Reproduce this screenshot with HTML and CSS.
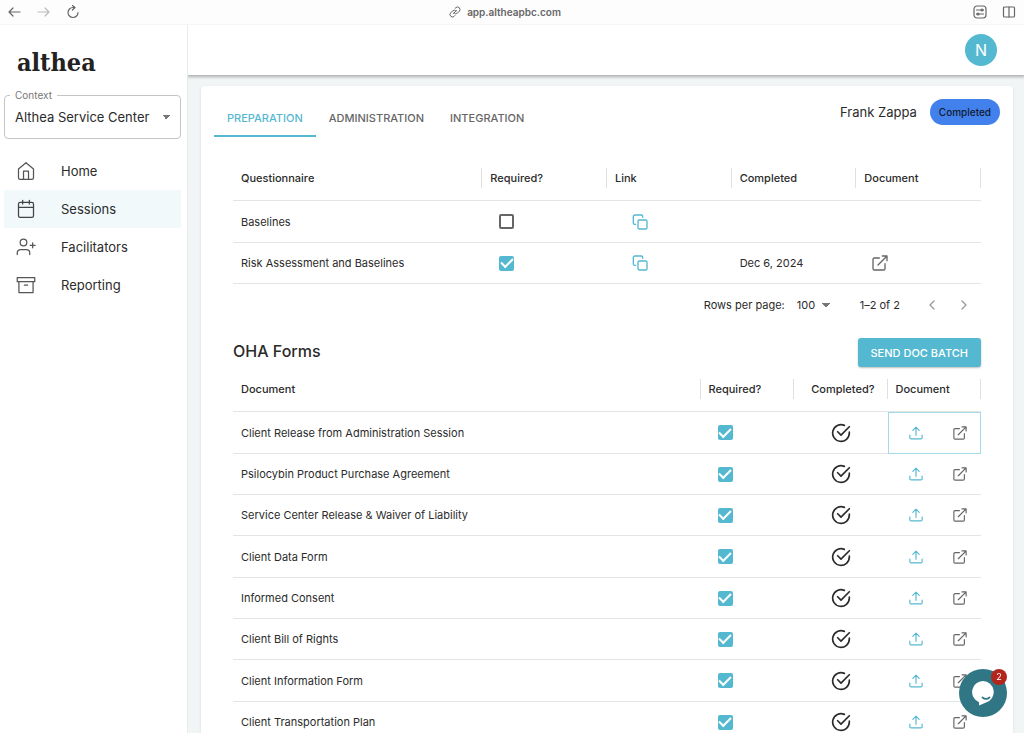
FILE: index.html
```html
<!DOCTYPE html>
<html lang="en">
<head>
<meta charset="utf-8">
<meta name="viewport" content="width=device-width, initial-scale=1">
<title>Althea</title>
<link rel="stylesheet" href="styles.css">
</head>
<body>
<svg class="sprite" aria-hidden="true">
  <symbol id="copy" viewBox="0 0 24 24"><rect x="9" y="9" width="13.500" height="13.500" rx="2"/><path d="M5.500 15.500H4a2 2 0 0 1-2-2V3.500a2 2 0 0 1 2-2h10a2 2 0 0 1 2 2V5"/></symbol>
  <symbol id="external" viewBox="0 0 24 24"><path d="M19.500 13v7.500a2 2 0 0 1-2 2h-14a2 2 0 0 1-2-2v-14a2 2 0 0 1 2-2H11M15.500 1.500h7v7M9 15 22.500 1.500"/></symbol>
  <symbol id="upload" viewBox="0 0 24 24"><path d="M1.500 15.500v4.500a2 2 0 0 0 2 2h17a2 2 0 0 0 2-2v-4.500M12 16V2M6.500 7.500 12 2l5.500 5.500"/></symbol>
  <symbol id="done" viewBox="0 0 24 24"><path d="M22 11v1a10 10 0 1 1-6-9.150M8 10.500l4 4L22 4.500"/></symbol>
</svg>

<header class="browser">
  <div class="browser-side">
    <button class="tool" aria-label="Back"><svg class="i14" viewBox="0 0 14 14"><path d="M1 7h11M5 3 1 7l4 4"/></svg></button>
    <button class="tool faded" aria-label="Forward"><svg class="i14" viewBox="0 0 14 14"><path d="M1 7h11M8 3l4 4-4 4"/></svg></button>
    <button class="tool" aria-label="Reload"><svg class="i14" viewBox="0 0 14 14"><path d="M12 7.500A5 5 0 1 1 7 2.500h2M6.500.5l2.500 2-2.500 2.500"/></svg></button>
  </div>
  <div class="address"><svg class="i12" viewBox="0 0 24 24"><path d="M10 14a5 5 0 0 0 7 0l4-4a5 5 0 0 0-7-7l-2 2M14 10a5 5 0 0 0-7 0l-4 4a5 5 0 0 0 7 7l2-2M9 15l6-6"/></svg><span>app.altheapbc.com</span></div>
  <div class="browser-side end">
    <button class="tool" aria-label="Page settings"><svg class="i14" viewBox="0 0 14 14"><rect x="1" y="1" width="12" height="12" rx="3"/><path d="M3.500 5H8M10 5h.5M3.500 9H4M6 9h4.500"/><circle cx="9" cy="5" r="1"/><circle cx="5" cy="9" r="1"/></svg></button>
    <button class="tool" aria-label="Split view"><svg class="i14" viewBox="0 0 14 14"><rect x="1.500" y="2" width="11" height="10" rx="1"/><path d="M7 2v10"/></svg></button>
  </div>
</header>

<div class="app">
  <aside class="sidebar">
    <div class="logo">althea</div>
    <fieldset class="context">
      <legend><label for="context">Context</label></legend>
      <select id="context"><option>Althea Service Center</option></select>
    </fieldset>
    <nav class="nav">
      <a href="#"><svg class="i20" viewBox="0 0 24 24"><path d="M3 9.500 12 2l9 7.500V20a2 2 0 0 1-2 2H5a2 2 0 0 1-2-2zM9 22V12h6v10"/></svg>Home</a>
      <a href="#" class="current" aria-current="page"><svg class="i20" viewBox="0 0 24 24"><rect x="3" y="4" width="18" height="18" rx="2"/><path d="M3 10h18M8 1.500V6M16 1.500V6"/></svg>Sessions</a>
      <a href="#"><svg class="i20" viewBox="0 0 24 24"><circle cx="9" cy="6.500" r="4"/><path d="M1.500 21v-2a4 4 0 0 1 4-4h7a4 4 0 0 1 4 4v2M20 7v6M17 10h6"/></svg>Facilitators</a>
      <a href="#"><svg class="i20" viewBox="0 0 24 24"><path d="M1.500 3h21v5h-21zM3.500 8v13h17V8M10 12h4"/></svg>Reporting</a>
    </nav>
  </aside>

  <div class="page">
    <header class="appbar"><button class="avatar" aria-label="Account">N</button></header>
    <main class="card">
      <div class="card-top">
        <div class="tabs" role="tablist">
          <button class="tab active" role="tab" aria-selected="true">PREPARATION</button>
          <button class="tab" role="tab" aria-selected="false">ADMINISTRATION</button>
          <button class="tab" role="tab" aria-selected="false">INTEGRATION</button>
        </div>
        <div class="client"><span class="client-name">Frank Zappa</span><span class="chip">Completed</span></div>
      </div>

      <div class="sheet">
        <table class="grid questionnaires">
          <thead><tr><th class="wide"><span>Questionnaire</span></th><th><span>Required?</span></th><th><span>Link</span></th><th><span>Completed</span></th><th><span>Document</span></th></tr></thead>
          <tbody>
            <tr><td>Baselines</td><td class="tick"><input type="checkbox" aria-label="Baselines required"></td><td class="link"><button class="icon teal" aria-label="Copy link"><svg class="i16"><use href="#copy"/></svg></button></td><td></td><td></td></tr>
            <tr><td>Risk Assessment and Baselines</td><td class="tick"><input type="checkbox" checked aria-label="Risk Assessment and Baselines required"></td><td class="link"><button class="icon teal" aria-label="Copy link"><svg class="i16"><use href="#copy"/></svg></button></td><td>Dec 6, 2024</td><td class="open"><button class="icon" aria-label="Open document"><svg class="i16"><use href="#external"/></svg></button></td></tr>
          </tbody>
        </table>
        <div class="pager">
          <label for="rows">Rows per page:</label>
          <select id="rows"><option>100</option></select>
          <span class="range">1–2 of 2</span>
          <button class="icon" disabled aria-label="Previous page"><svg class="i12" viewBox="0 0 12 12"><path d="M8 2 4 6l4 4"/></svg></button>
          <button class="icon" disabled aria-label="Next page"><svg class="i12" viewBox="0 0 12 12"><path d="m4 2 4 4-4 4"/></svg></button>
        </div>

        <div class="forms-top"><h2>OHA Forms</h2><button class="send">SEND DOC BATCH</button></div>
        <table class="grid forms">
          <thead><tr><th class="wide"><span>Document</span></th><th><span>Required?</span></th><th class="completed"><span>Completed?</span></th><th><span>Document</span></th></tr></thead>
          <tbody>
            <tr><td>Client Release from Administration Session</td><td class="tick"><input type="checkbox" checked aria-label="Required"></td><td class="mid"><svg class="i20"><use href="#done"/></svg></td><td class="focused"><div class="actions"><button class="icon teal" aria-label="Upload"><svg class="i14"><use href="#upload"/></svg></button><button class="icon" aria-label="Open"><svg class="i14"><use href="#external"/></svg></button></div></td></tr>
            <tr><td>Psilocybin Product Purchase Agreement</td><td class="tick"><input type="checkbox" checked aria-label="Required"></td><td class="mid"><svg class="i20"><use href="#done"/></svg></td><td><div class="actions"><button class="icon teal" aria-label="Upload"><svg class="i14"><use href="#upload"/></svg></button><button class="icon" aria-label="Open"><svg class="i14"><use href="#external"/></svg></button></div></td></tr>
            <tr><td>Service Center Release &amp; Waiver of Liability</td><td class="tick"><input type="checkbox" checked aria-label="Required"></td><td class="mid"><svg class="i20"><use href="#done"/></svg></td><td><div class="actions"><button class="icon teal" aria-label="Upload"><svg class="i14"><use href="#upload"/></svg></button><button class="icon" aria-label="Open"><svg class="i14"><use href="#external"/></svg></button></div></td></tr>
            <tr><td>Client Data Form</td><td class="tick"><input type="checkbox" checked aria-label="Required"></td><td class="mid"><svg class="i20"><use href="#done"/></svg></td><td><div class="actions"><button class="icon teal" aria-label="Upload"><svg class="i14"><use href="#upload"/></svg></button><button class="icon" aria-label="Open"><svg class="i14"><use href="#external"/></svg></button></div></td></tr>
            <tr><td>Informed Consent</td><td class="tick"><input type="checkbox" checked aria-label="Required"></td><td class="mid"><svg class="i20"><use href="#done"/></svg></td><td><div class="actions"><button class="icon teal" aria-label="Upload"><svg class="i14"><use href="#upload"/></svg></button><button class="icon" aria-label="Open"><svg class="i14"><use href="#external"/></svg></button></div></td></tr>
            <tr><td>Client Bill of Rights</td><td class="tick"><input type="checkbox" checked aria-label="Required"></td><td class="mid"><svg class="i20"><use href="#done"/></svg></td><td><div class="actions"><button class="icon teal" aria-label="Upload"><svg class="i14"><use href="#upload"/></svg></button><button class="icon" aria-label="Open"><svg class="i14"><use href="#external"/></svg></button></div></td></tr>
            <tr><td>Client Information Form</td><td class="tick"><input type="checkbox" checked aria-label="Required"></td><td class="mid"><svg class="i20"><use href="#done"/></svg></td><td><div class="actions"><button class="icon teal" aria-label="Upload"><svg class="i14"><use href="#upload"/></svg></button><button class="icon" aria-label="Open"><svg class="i14"><use href="#external"/></svg></button></div></td></tr>
            <tr><td>Client Transportation Plan</td><td class="tick"><input type="checkbox" checked aria-label="Required"></td><td class="mid"><svg class="i20"><use href="#done"/></svg></td><td><div class="actions"><button class="icon teal" aria-label="Upload"><svg class="i14"><use href="#upload"/></svg></button><button class="icon" aria-label="Open"><svg class="i14"><use href="#external"/></svg></button></div></td></tr>
          </tbody>
        </table>
      </div>
    </main>
  </div>
</div>

<button class="chat" aria-label="Open chat, 2 unread">
  <svg class="bubble" viewBox="0 0 24 26"><path fill="#fff" d="M12 1a11 11 0 0 1 3 21.500L8 25.500v-3.300A11 11 0 0 1 12 1z"/><path d="M11.500 17.500c2 1.600 5 1.600 7 0" fill="none" stroke="#307684" stroke-width="1.800" stroke-linecap="round"/></svg>
  <span class="unread">2</span>
</button>
</body>
</html>
```
FILE: styles.css
```css
* { box-sizing: border-box; }
html { scrollbar-width: none; }
body {
  margin: 0;
  min-height: 100vh;
  display: flex;
  flex-direction: column;
  font: 11px/16px Inter, "Liberation Sans", sans-serif;
  color: #2b2b2b;
  background: #f1f5f6;
}
button, select, input { font: inherit; color: inherit; margin: 0; }
button { border: 0; background: none; padding: 0; cursor: pointer; }
svg { display: block; fill: none; stroke: currentColor; stroke-width: 2; stroke-linejoin: round; stroke-linecap: round; flex: none; }
.sprite { position: absolute; width: 0; height: 0; }
.i12 { width: 12px; height: 12px; }
.i14 { width: 14px; height: 14px; }
.i16 { width: 16px; height: 16px; }
.i20 { width: 20px; height: 20px; }

/* Browser toolbar */
.browser { height: 25px; display: flex; align-items: center; padding: 0 8px; background: #fdfdfd; border-bottom: 1px solid #f5f5f5; color: #666; }
.browser svg { stroke-width: 1.2; }
.browser-side { flex: 1; display: flex; gap: 15px; }
.browser-side.end { justify-content: flex-end; }
.faded { color: #bbb; }
.address { display: flex; align-items: center; gap: 6px; margin-right: 14px; font-size: 10px; font-weight: 600; color: #666; }
.address svg { stroke-width: 2; }

/* Sidebar */
.app { flex: 1; display: flex; }
.sidebar { width: 188px; flex: none; padding: 22px 6px 0 4px; background: #fff; border-right: 1px solid #e8ebec; }
.logo { padding-left: 13px; font: bold 25px/32px "DejaVu Serif Condensed", "DejaVu Serif", serif; color: #222; }
.context { margin: 11px 0 13px; min-width: 0; height: 49px; padding: 0 10px; border: 1px solid #c4c4c4; border-radius: 4px; }
.context legend { padding: 0 5px; margin-left: -5px; font-size: 10px; line-height: 10px; color: #777; }
.context select { width: 100%; height: 34px; font-size: 13px; }
select { appearance: none; border: 0; padding: 0 14px 0 0; background: conic-gradient(from -45deg at 50% 100%, #777 90deg, transparent 0) right center / 8px 4px no-repeat; }
.nav { display: flex; flex-direction: column; }
.nav a { height: 38px; display: flex; align-items: center; gap: 25px; padding-left: 12px; font-size: 13px; color: #2b2b2b; text-decoration: none; }
.nav svg { stroke-width: 1.5; color: #555; }
.nav .current { background: #f1f9fb; }
.nav .current svg { color: #444; }

/* Main area */
.page { flex: 1; min-width: 0; display: flex; flex-direction: column; }
.appbar { height: 50px; display: flex; align-items: center; justify-content: flex-end; padding-right: 27px; background: #fff; box-shadow: 0 1px 3px 1px rgba(0, 0, 0, .28); clip-path: inset(0 0 -8px 0); }
.avatar { width: 32px; height: 32px; border-radius: 50%; background: #55b8d1; color: #fff; font-size: 16px; }
.card { flex: 1; margin: 11px 11px 0 13px; padding-bottom: 32px; background: #fff; border-radius: 4px; box-shadow: 0 1px 3px rgba(0, 0, 0, .1); }
.card-top { display: flex; justify-content: space-between; align-items: flex-start; padding: 13px 13px 0; }
.tabs { display: flex; }
.tab { height: 38px; padding: 2px 13px 0; border-bottom: 2px solid transparent; color: #666; font-weight: 500; }
.tab.active { color: #55b8d1; border-color: #55b8d1; }
.client { display: flex; align-items: center; gap: 13px; }
.client-name { font-size: 13px; }
.chip { height: 26px; padding: 0 9px; border-radius: 13px; background: #4281ec; color: #111a30; font-size: 10px; font-weight: 500; line-height: 26px; }

/* Tables */
.sheet { padding: 19px 32px 0; }
.grid { width: 100%; table-layout: fixed; border-collapse: separate; border-spacing: 0; }
.grid th, .grid td { padding: 0; text-align: left; border-bottom: 1px solid #e3e4e4; }
.grid th { height: 45px; font-weight: 500; }
.grid th span { display: block; padding: 0 8px; line-height: 20px; border-right: 1px solid #e0e0e0; }
.grid .wide span { border-right-color: #e0e0e0; }
.grid .completed span { padding-right: 12px; text-align: right; }
.grid td { height: 41px; padding: 0 8px; }
.grid tbody tr:nth-child(3n + 1) td { height: 42px; }
.questionnaires .wide { width: 33.3333%; }
.forms .wide { width: 62.5%; }
.mid svg { margin: 0 auto; }
.grid .tick { padding-left: 17px; }
.grid .link { padding-left: 25px; }
.grid .open { padding-left: 16px; }
.grid .focused { border: 1px solid #a5dbe8; }
.icon { display: block; color: #666; }
.icon.teal { color: #55b8d1; }
.actions { display: flex; gap: 30px; padding-left: 13px; }
.focused .actions { padding-left: 12px; }
input[type="checkbox"] { appearance: none; display: grid; place-items: center; width: 15px; height: 15px; border: 2px solid #666; border-radius: 2px; }
input[type="checkbox"]:checked { border: 0; background: #55b8d1; }
input[type="checkbox"]:checked::before { content: ""; width: 10px; height: 5px; margin-bottom: 3px; border: solid #fff; border-width: 0 0 2px 2px; transform: rotate(-45deg); }
.pager { height: 42px; display: flex; align-items: center; justify-content: flex-end; padding-right: 11px; }
.pager select { width: 33px; margin: 0 30px 0 12px; }
.range { margin-right: 26px; }
.pager .icon { color: #999; }
.pager .icon + .icon { margin-left: 20px; }
.pager svg { stroke-width: 1.3; }

.forms-top { display: flex; justify-content: space-between; align-items: flex-start; margin-top: 12px; }
.forms-top h2 { margin: 0; font-size: 16px; line-height: 26px; font-weight: 500; }
.send { height: 29px; padding: 0 13px; border-radius: 3px; background: #55b8d1; color: #fff; font-weight: 500; box-shadow: 0 1px 2px rgba(0, 0, 0, .25); }

/* Chat launcher */
.chat { position: fixed; right: 17px; bottom: 16px; width: 48px; height: 48px; border-radius: 50%; background: #307684; display: flex; align-items: center; justify-content: center; }
.bubble { width: 24px; height: 26px; stroke: none; }
.unread { position: absolute; top: 0; right: 0; width: 16px; height: 16px; border-radius: 50%; background: #b3261e; color: #fff; font-size: 9px; line-height: 16px; }
```
